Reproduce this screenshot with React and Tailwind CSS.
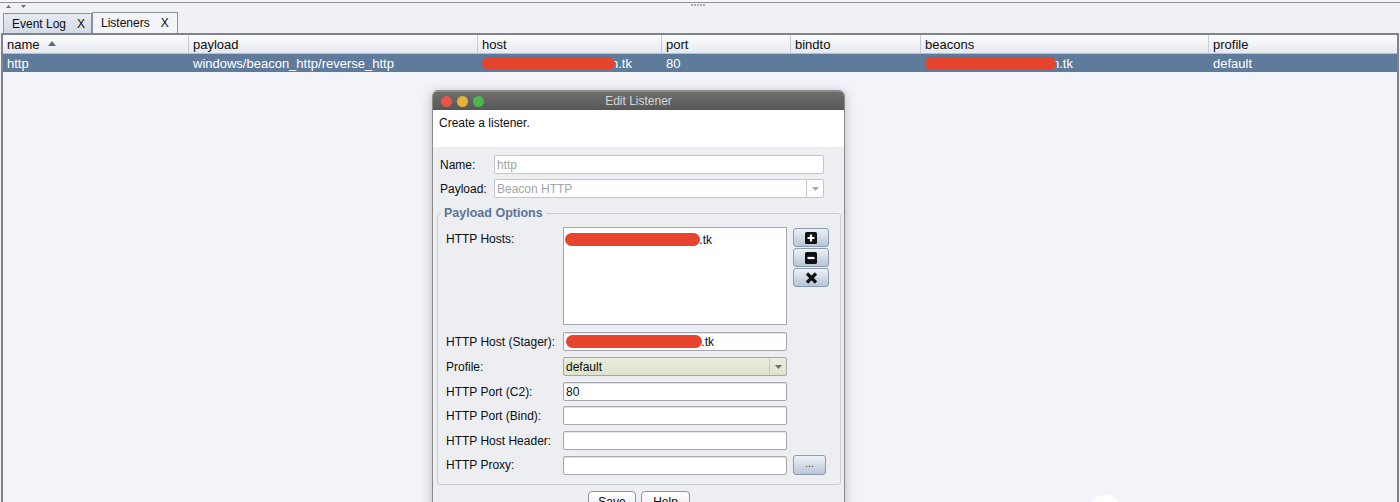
import React from 'react';

const FONT = "font-['Liberation_Sans',Arial,sans-serif]";

const columns = [
  { key: 'name', label: 'name', w: 'w-[186px]', sort: true },
  { key: 'payload', label: 'payload', w: 'w-[289px]' },
  { key: 'host', label: 'host', w: 'w-[184px]' },
  { key: 'port', label: 'port', w: 'w-[129px]' },
  { key: 'bindto', label: 'bindto', w: 'w-[130px]' },
  { key: 'beacons', label: 'beacons', w: 'w-[288px]' },
  { key: 'profile', label: 'profile', w: 'flex-1' },
];

function Redacted({ w }) {
  return <span className={`relative z-10 inline-block h-[13px] rounded-full bg-[#e8432d] align-[-2px] -mr-[4px] ${w}`} />;
}

function Cell({ w, children, last }) {
  return (
    <div className={`${w} h-full flex items-center pl-[4px] pt-[1px] overflow-hidden whitespace-nowrap ${last ? '' : 'border-r border-[#c9ccd4]'}`}>
      {children}
    </div>
  );
}

function SortArrow() {
  return (
    <svg width="8" height="5" viewBox="0 0 8 5" className="ml-[8px] mb-[3px]">
      <path d="M0 5 L4 0 L8 5 Z" fill="#666a70" />
    </svg>
  );
}

function Field({ className = '', children }) {
  return (
    <div className={`h-[19px] bg-white border border-[#a4a7ae] rounded-[2px] shadow-[inset_0_1px_1px_rgba(0,0,0,0.12)] flex items-center pl-[2px] text-[12px] text-[#0d0d0d] overflow-hidden whitespace-nowrap ${className}`}>
      {children}
    </div>
  );
}

function ComboArrow({ color = '#8a8d92' }) {
  return (
    <div className="ml-auto h-full w-[17px] border-l border-[#c6c9ce] flex items-center justify-center">
      <svg width="7" height="4" viewBox="0 0 7 4">
        <path d="M0 0 L7 0 L3.5 4 Z" fill={color} />
      </svg>
    </div>
  );
}

function ListButton({ children }) {
  return (
    <div className="w-[36px] h-[19px] rounded-[3px] border border-[#8c9bb0] bg-linear-to-b from-[#edf1f6] to-[#b7c5d6] flex items-center justify-center">
      {children}
    </div>
  );
}

function Row({ label, children, className = '' }) {
  return (
    <div className={`flex items-center ${className}`}>
      <div className="w-[117px] text-[12px] text-[#0d0d0d]">{label}</div>
      {children}
    </div>
  );
}

export default function App() {
  return (
    <div className={`relative w-[1400px] h-[502px] overflow-hidden bg-[#f0f1f5] flex flex-col ${FONT}`}>
      {/* top frame */}
      <div className="h-[2px] bg-[#f6f6f8]" />
      <div className="h-[1px] bg-[#8d9096]" />
      <div className="h-[9px] relative flex items-start">
        <svg width="24" height="5" viewBox="0 0 24 5" className="ml-[5px] mt-[1px]">
          <path d="M1 4 L3.5 1 L6 4 Z" fill="#6d7075" />
          <path d="M16 1 L21 1 L18.5 4 Z" fill="#6d7075" />
        </svg>
        <div className="absolute left-[691px] top-[1px] flex gap-[1px]">
          {[0, 1, 2, 3, 4].map(i => (
            <span key={i} className="w-[2px] h-[2px] bg-[#a9acb3]" />
          ))}
        </div>
      </div>

      {/* tabs */}
      <div className="h-[21px] flex items-end pl-[3px]">
        <div className="h-[20px] w-[89px] border border-b-0 border-[#8c9098] bg-linear-to-b from-[#e6ebf2] to-[#d3dbe6] flex items-center pl-[8px] gap-[11px] text-[12px] text-[#0d0d0d]">
          <span>Event Log</span>
          <span>X</span>
        </div>
        <div className="h-[21px] w-[86px] border border-b-0 border-[#8c9098] bg-[#f3f4f8] flex items-center pl-[8px] gap-[11px] text-[12px] text-[#0d0d0d]">
          <span>Listeners</span>
          <span>X</span>
        </div>
      </div>

      {/* table */}
      <div className="flex-1 mx-[1px] border-t-2 border-x-2 border-[#7f838b] bg-[#f3f4fa] flex flex-col">
        <div className="h-[19px] flex border-b border-[#b9bdc6] bg-linear-to-b from-[#fbfcfd] to-[#e6e9ef] text-[13px] text-[#0d0d0d]">
          {columns.map((c, i) => (
            <Cell key={c.key} w={c.w} last={i === columns.length - 1}>
              {c.label}
              {c.sort && <SortArrow />}
            </Cell>
          ))}
        </div>
        <div className="h-[18px] flex bg-[#5f7b9b] text-[13px] text-white">
          <Cell w="w-[186px]" last>http</Cell>
          <Cell w="w-[289px]" last>windows/beacon_http/reverse_http</Cell>
          <Cell w="w-[184px]" last><Redacted w="w-[133px]" />n.tk</Cell>
          <Cell w="w-[129px]" last>80</Cell>
          <Cell w="w-[130px]" last></Cell>
          <Cell w="w-[288px]" last><Redacted w="w-[131px]" />n.tk</Cell>
          <Cell w="flex-1" last>default</Cell>
        </div>
      </div>

      {/* Edit Listener dialog */}
      <div className="absolute left-[432px] top-[90px] w-[413px] h-[430px] border border-[#8a8a8a] rounded-t-[6px] overflow-hidden bg-[#eceef2] shadow-[0_2px_12px_rgba(0,0,0,0.25)] flex flex-col">
        <div className="h-[19px] bg-linear-to-b from-[#6e6e6e] to-[#575757] border-t border-[#8a8a8a] relative flex items-center justify-center">
          <div className="absolute left-[8px] top-[4px] flex gap-[5px]">
            <span className="w-[11px] h-[11px] rounded-full bg-[#e9544c]" />
            <span className="w-[11px] h-[11px] rounded-full bg-[#e3b23a]" />
            <span className="w-[11px] h-[11px] rounded-full bg-[#4fb64a]" />
          </div>
          <span className="text-[12px] text-[#d6d6d6]">Edit Listener</span>
        </div>

        <div className="h-[37px] bg-white pl-[6px] pt-[4px] text-[12px] text-[#0d0d0d]">Create a listener.</div>

        <div className="px-[4px] pt-[8px] flex flex-col">
          <div className="flex items-center pl-[3px]">
            <div className="w-[54px] text-[12px] text-[#0d0d0d]">Name:</div>
            <Field className="w-[330px] bg-[#f4f5f7] border-[#c3c6cc] text-[#a2a4a8] shadow-none">http</Field>
          </div>
          <div className="flex items-center pl-[3px] mt-[5px]">
            <div className="w-[54px] text-[12px] text-[#0d0d0d]">Payload:</div>
            <Field className="w-[330px] bg-[#f4f5f7] border-[#c3c6cc] text-[#a2a4a8] shadow-none">
              Beacon HTTP
              <ComboArrow color="#a5a8ad" />
            </Field>
          </div>

          <fieldset className="mt-[8px] w-[404px] border border-[#c8ccd4] rounded-[3px] pl-[8px] pb-[9px]">
            <legend className="ml-[-5px] px-[3px] text-[12.5px] leading-[15px] font-bold text-[#5d7396]">Payload Options</legend>

            <div className="flex items-start mt-[6px]">
              <div className="w-[117px] pt-[3px] text-[12px] text-[#0d0d0d]">HTTP Hosts:</div>
              <div className="w-[224px] h-[98px] bg-white border border-[#a4a7ae] pl-[1px] pt-[3px] text-[12px] text-[#0d0d0d] whitespace-nowrap">
                <Redacted w="w-[135px]" /><span className="relative">&nbsp;.tk</span>
              </div>
              <div className="ml-[6px] mt-[1px] flex flex-col gap-[1px]">
                <ListButton>
                  <svg width="12" height="12" viewBox="0 0 12 12">
                    <rect width="12" height="12" rx="1.5" fill="#111" />
                    <path d="M6 2.5 V9.5 M2.5 6 H9.5" stroke="#fff" strokeWidth="2.2" />
                  </svg>
                </ListButton>
                <ListButton>
                  <svg width="12" height="12" viewBox="0 0 12 12">
                    <rect width="12" height="12" rx="1.5" fill="#111" />
                    <path d="M2.5 6 H9.5" stroke="#fff" strokeWidth="2.2" />
                  </svg>
                </ListButton>
                <ListButton>
                  <svg width="13" height="12" viewBox="0 0 13 12">
                    <path d="M2 1.5 L11 10.5 M11 1.5 L2 10.5" stroke="#111" strokeWidth="3.2" />
                  </svg>
                </ListButton>
              </div>
            </div>

            <Row label="HTTP Host (Stager):" className="mt-[7px]">
              <Field className="w-[224px]"><Redacted w="w-[136px]" /><span className="relative">&nbsp;.tk</span></Field>
            </Row>
            <Row label="Profile:" className="mt-[6px]">
              <Field className="w-[224px] bg-linear-to-b from-[#eaeedf] to-[#dde3ca] border-[#9fa39a] shadow-none">
                default
                <ComboArrow color="#6f7268" />
              </Field>
            </Row>
            <Row label="HTTP Port (C2):" className="mt-[6px]">
              <Field className="w-[224px]">80</Field>
            </Row>
            <Row label="HTTP Port (Bind):" className="mt-[5px]">
              <Field className="w-[224px]" />
            </Row>
            <Row label="HTTP Host Header:" className="mt-[6px]">
              <Field className="w-[224px]" />
            </Row>
            <Row label="HTTP Proxy:" className="mt-[5px]">
              <Field className="w-[224px]" />
              <div className="ml-[6px] w-[33px] h-[20px] rounded-[3px] border border-[#8c9bb0] bg-linear-to-b from-[#eef2f7] to-[#b9c7d8] flex items-center justify-center text-[10px] text-[#333] leading-none pb-[2px]">...</div>
            </Row>
          </fieldset>

          <div className="mt-[6px] flex justify-center gap-[5px] pl-[1px]">
            <div className="w-[48px] h-[22px] rounded-[4px] border border-[#8e9299] bg-linear-to-b from-[#ffffff] to-[#e4e6ea] flex items-center justify-center text-[12px] text-[#0d0d0d]">Save</div>
            <div className="w-[49px] h-[22px] rounded-[4px] border border-[#8e9299] bg-linear-to-b from-[#ffffff] to-[#e4e6ea] flex items-center justify-center text-[12px] text-[#0d0d0d]">Help</div>
          </div>
        </div>
      </div>

      {/* round overlay at bottom */}
      <div className="absolute left-[1088px] top-[495px] w-[34px] h-[34px] rounded-full bg-white" />
    </div>
  );
}
